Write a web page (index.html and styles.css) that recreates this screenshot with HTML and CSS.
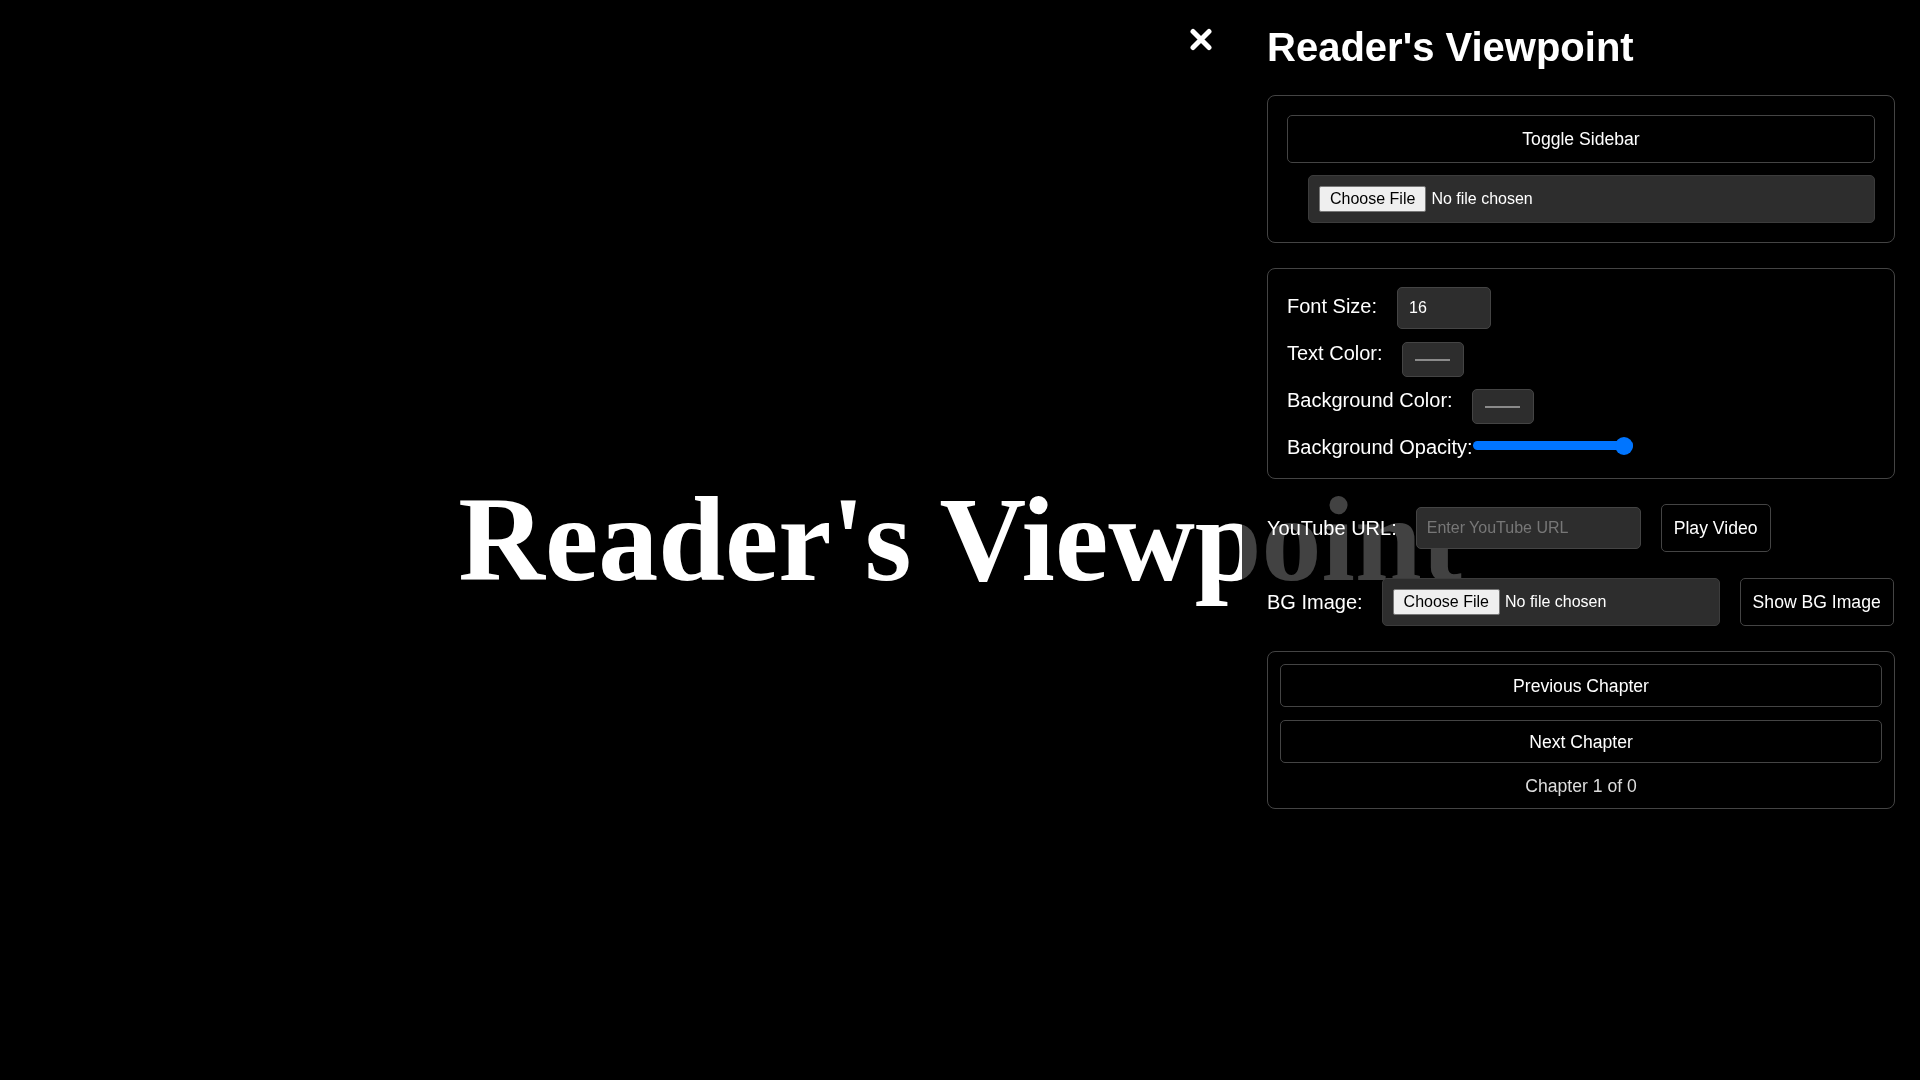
FILE: index.html
```html
<!DOCTYPE html>
<html lang="en">
<head>
<meta charset="utf-8">
<title>Reader's Viewpoint</title>
<link rel="stylesheet" href="styles.css">
</head>
<body>
<main class="stage">
  <h1 class="stage-title">Reader's Viewpoint</h1>
</main>

<aside class="sidebar">
  <button class="close-btn" aria-label="Close sidebar">
    <svg width="22" height="23" viewBox="0 0 22 23" aria-hidden="true">
      <path d="M3 3.5 L19 19.5 M19 3.5 L3 19.5" stroke="#fff" stroke-width="5" stroke-linecap="round" fill="none"/>
    </svg>
  </button>

  <h2 class="side-title">Reader's Viewpoint</h2>

  <section class="panel panel-top">
    <button class="btn btn-wide">Toggle Sidebar</button>
    <input class="file-input file-wide" type="file">
  </section>

  <section class="panel panel-settings">
    <div class="row row-font">
      <label class="lbl" for="fs">Font Size:</label>
      <input id="fs" class="text-input num-input" type="text" value="16">
    </div>
    <div class="row">
      <label class="lbl">Text Color:</label>
      <span class="swatch"><span class="swatch-line"></span></span>
    </div>
    <div class="row">
      <label class="lbl">Background Color:</label>
      <span class="swatch"><span class="swatch-line"></span></span>
    </div>
    <div class="row">
      <label class="lbl lbl-tight" for="op">Background Opacity:</label>
      <input id="op" class="range" type="range" min="0" max="1" step="0.1" value="1">
    </div>
  </section>

  <div class="line-row">
    <label class="lbl" for="yt">YouTube URL:</label>
    <input id="yt" class="text-input url-input" type="text" placeholder="Enter YouTube URL">
    <button class="btn btn-inline">Play Video</button>
  </div>

  <div class="line-row line-row-bg">
    <label class="lbl">BG Image:</label>
    <input class="file-input file-bg" type="file">
    <button class="btn btn-inline">Show BG Image</button>
  </div>

  <section class="panel panel-chapters">
    <button class="btn btn-chapter">Previous Chapter</button>
    <button class="btn btn-chapter">Next Chapter</button>
    <p class="chapter-info">Chapter 1 of 0</p>
  </section>
</aside>
</body>
</html>
```

FILE: styles.css
```css
* {
  box-sizing: border-box;
}

html, body {
  margin: 0;
  height: 100%;
}

body {
  background: #000;
  color: #fff;
  font-family: "Liberation Sans", Arial, sans-serif;
  overflow: hidden;
}

.stage {
  height: 100vh;
  display: flex;
  align-items: center;
  justify-content: center;
}

.stage-title {
  margin: 0;
  font-family: "Liberation Serif", "Times New Roman", serif;
  font-weight: bold;
  font-size: 120px;
  color: #fff;
  white-space: nowrap;
}

.sidebar {
  position: fixed;
  top: 0;
  right: 0;
  bottom: 0;
  width: 678px;
  padding: 25px;
  background: rgba(0, 0, 0, 0.74);
  display: flex;
  flex-direction: column;
  gap: 25px;
}

.close-btn {
  position: absolute;
  left: -52px;
  top: 28px;
  width: 22px;
  height: 23px;
  padding: 0;
  border: 0;
  background: none;
  display: flex;
}

.side-title {
  margin: 0;
  font-size: 40px;
  font-weight: bold;
  color: #fff;
}

.panel {
  border: 1px solid #444;
  border-radius: 8px;
}

.panel-top {
  padding: 19px;
  display: flex;
  flex-direction: column;
  gap: 12px;
}

.btn {
  font-family: "Liberation Sans", Arial, sans-serif;
  font-size: 17.6px;
  line-height: 20px;
  color: #fff;
  background: transparent;
  border: 1px solid #444;
  border-radius: 5px;
  padding: 13px 12px;
  cursor: pointer;
}

.btn-wide {
  width: 100%;
}

.file-input {
  font-family: "Liberation Sans", Arial, sans-serif;
  font-size: 16px;
  line-height: 18px;
  color: #fff;
  background: #2d2d2d;
  border: 1px solid #3c3c3c;
  border-radius: 5px;
  padding: 10px;
  height: 48px;
}

.file-input::file-selector-button {
  font-family: "Liberation Sans", Arial, sans-serif;
  font-size: 16px;
  line-height: 18px;
  color: #000;
  background: #efefef;
  border: 1px solid #767676;
  border-radius: 2px;
  padding: 3px 10px;
  margin-right: 5px;
  height: 26px;
}

.file-wide {
  margin-left: 21px;
  width: calc(100% - 21px);
}

.file-bg {
  width: 338px;
}

.panel-settings {
  padding: 18px 19px 19px;
  display: flex;
  flex-direction: column;
  gap: 13px;
}

.row {
  display: flex;
  align-items: flex-start;
  height: 34px;
}

.row:last-child {
  height: 23px;
}

.row-font {
  height: 42px;
  align-items: baseline;
}

.lbl {
  font-size: 20px;
  line-height: 23px;
  color: #fff;
  margin-right: 19px;
  white-space: nowrap;
}

.row-font .lbl {
  margin-right: 20px;
}

.lbl-tight {
  margin-right: 0;
}

.text-input {
  font-family: "Liberation Sans", Arial, sans-serif;
  font-size: 16px;
  color: #fff;
  background: #2d2d2d;
  border: 1px solid #444;
  border-radius: 5px;
  padding: 0 10px;
  height: 42px;
  outline: none;
}

.text-input::placeholder {
  color: #777;
}

.num-input {
  width: 94px;
  padding-left: 11px;
}

.url-input {
  width: 225px;
}

.swatch {
  width: 62px;
  height: 35px;
  background: #2d2d2d;
  border: 1px solid #444;
  border-radius: 5px;
  display: flex;
  align-items: center;
  justify-content: center;
}

.swatch-line {
  width: 35px;
  height: 2px;
  background: #8a8a8a;
}

.range {
  -webkit-appearance: none;
  appearance: none;
  width: 160px;
  height: 19px;
  margin: 0;
  background: transparent;
}

.range::-webkit-slider-runnable-track {
  height: 9px;
  border-radius: 5px;
  background: #0075ff;
}

.range::-webkit-slider-thumb {
  -webkit-appearance: none;
  width: 18px;
  height: 18px;
  border-radius: 50%;
  background: #0075ff;
  margin-top: -4.5px;
  border: 0;
}

.line-row {
  display: flex;
  align-items: center;
  height: 48px;
}

.line-row-bg {
  margin-top: 1px;
}

.line-row .lbl {
  margin-right: 19px;
}

.btn-inline {
  margin-left: 20px;
  white-space: nowrap;
}

.panel-chapters {
  padding: 12px;
  display: flex;
  flex-direction: column;
  gap: 13px;
}

.btn-chapter {
  width: 100%;
  padding: 11px 12px 10px;
  line-height: 20px;
}

.chapter-info {
  margin: 0;
  text-align: center;
  font-size: 17.6px;
  line-height: 20px;
  color: #ddd;
}
```
